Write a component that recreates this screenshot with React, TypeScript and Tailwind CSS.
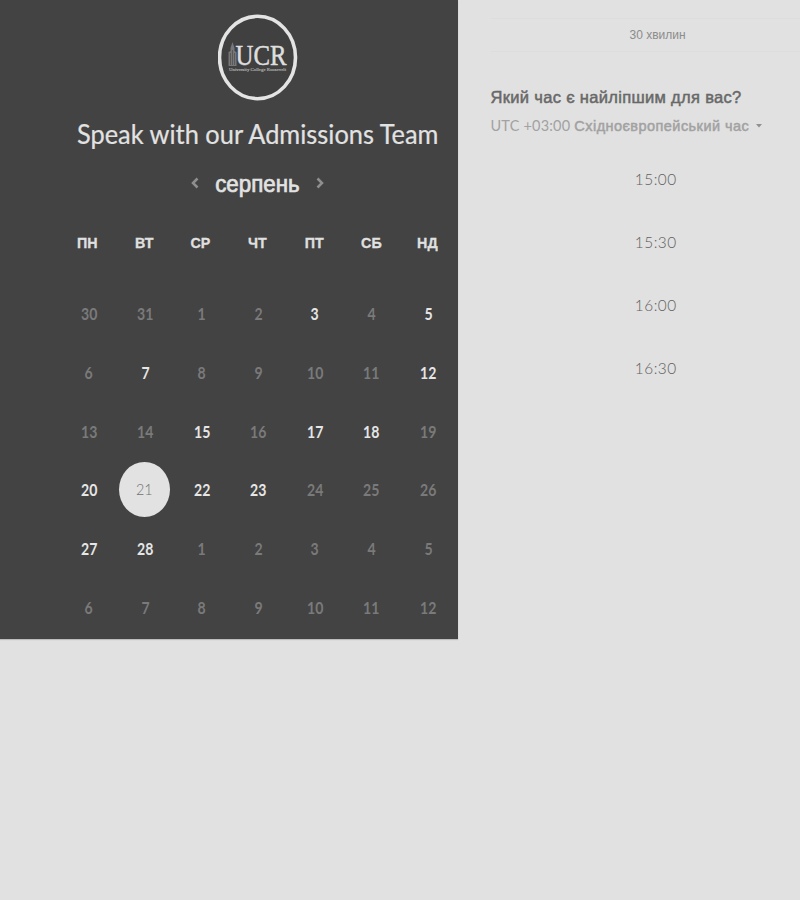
import React from "react";

const weekdays = ["ПН", "ВТ", "СР", "ЧТ", "ПТ", "СБ", "НД"];

const weeks = [
  [30, 31, 1, 2, 3, 4, 5],
  [6, 7, 8, 9, 10, 11, 12],
  [13, 14, 15, 16, 17, 18, 19],
  [20, 21, 22, 23, 24, 25, 26],
  [27, 28, 1, 2, 3, 4, 5],
  [6, 7, 8, 9, 10, 11, 12],
];

const open = [[4, 6], [1, 6], [2, 4, 5], [0, 2, 3], [0, 1], []];
const times = ["15:00", "15:30", "16:00", "16:30"];

function Logo() {
  return (
    <svg width="80" height="87" viewBox="0 0 80 87" className="block">
      <ellipse cx="39.5" cy="43.5" rx="38" ry="41.2" fill="#404040" stroke="#e4e4e4" strokeWidth="3.6" />
      <path d="M10.500 52V38l2-1v-3l2-6 2 6v3l2 1v14z" fill="#777" />
      <path d="M12.500 39v12M14.500 36v15M16.500 39v12" stroke="#4c4c4c" strokeWidth="0.7" />
      <text x="17.5" y="50.5" textLength="51" lengthAdjust="spacingAndGlyphs" fontFamily="'Liberation Serif', serif" fontSize="28.5" fill="#dedede" stroke="#dedede" strokeWidth="0.5">UCR</text>
      <text x="11" y="56.5" textLength="57" lengthAdjust="spacingAndGlyphs" fontFamily="'Liberation Serif', serif" fontSize="5" fill="#a8a8a8" stroke="#a8a8a8" strokeWidth="0.2">University College Roosevelt</text>
    </svg>
  );
}

function Chevron({ d }: { d: string }) {
  return (
    <svg width="8" height="12" viewBox="0 0 8 12" fill="none" stroke="#8f8f8f" strokeWidth="2.5">
      <path d={d} />
    </svg>
  );
}

function Day({ day, active, selected }: { day: number; active: boolean; selected: boolean }) {
  if (selected) {
    return (
      <div className="flex items-center justify-center">
        <div className="-mt-[2px] -ml-[2px] flex h-[55px] w-[51px] shrink-0 items-center justify-center rounded-[50%] bg-[#e2e2e2] text-[16px] font-light text-[#707070]">
          <span className="-mt-px scale-x-90">{day}</span>
        </div>
      </div>
    );
  }
  return (
    <div className={"flex items-center justify-center text-[16px] font-bold " + (active ? "text-[#e6e6e6]" : "text-[#7a7a7a]")}>
      <span className="scale-x-[.88] scale-y-[1.04]">{day}</span>
    </div>
  );
}

export default function App() {
  return (
    <div className="flex h-[900px] w-[800px] items-start overflow-hidden bg-[#e1e1e1] font-['Lato','Liberation_Sans',sans-serif]">
      <aside className="flex h-[639px] w-[457.5px] shrink-0 flex-col bg-[#434343] shadow-[0_1px_1px_#bdbdbd]">
        <div className="ml-[218px] mt-[14px] h-[87px]"><Logo /></div>
        <h1 className="ml-[77px] mt-[17px] h-8 w-max origin-left scale-x-[.976] whitespace-nowrap text-[26px] leading-8 text-[#e2e2e2] [-webkit-text-stroke:0.2px_#e2e2e2]">
          Speak with our Admissions Team
        </h1>
        <div className="ml-[191px] mt-[17px] flex h-8 w-[133.5px] items-center justify-between">
          <Chevron d="M6.500 1.500 2 6l4.500 4.500" />
          <span className="-mx-1 mt-[2px] scale-x-[.93] font-['Liberation_Sans',sans-serif] text-[24px] leading-8 text-[#e2e2e2] [-webkit-text-stroke:0.7px_#e2e2e2]">серпень</span>
          <Chevron d="M1.500 1.500 6 6l-4.500 4.500" />
        </div>
        <div className="ml-[59px] mt-[34px] grid h-5 w-[397px] grid-cols-7">
          {weekdays.map((d) => (
            <div key={d} className="scale-x-[.92] text-center font-['Liberation_Sans',sans-serif] text-[15.5px] font-bold leading-5 text-[#e0e0e0] [-webkit-text-stroke:0.3px_#e0e0e0]">{d}</div>
          ))}
        </div>
        <div className="ml-[60.500px] mt-[31.5px] grid h-[353px] w-[396px] shrink-0 grid-cols-7 grid-rows-6">
          {weeks.map((week, r) =>
            week.map((day, c) => (
              <Day key={r + "-" + c} day={day} active={open[r].includes(c)} selected={r === 3 && c === 1} />
            ))
          )}
        </div>
      </aside>
      <main className="flex min-w-0 flex-1 flex-col pl-[33px]">
        <div className="mt-[18px] flex h-[34px] items-center border-y border-[#dddddd] pl-[139px]">
          <span className="font-['Liberation_Sans',sans-serif] text-[12px] text-[#8c8c8c]">30 хвилин</span>
        </div>
        <h2 className="mt-[33px] h-6 whitespace-nowrap font-['Liberation_Sans',sans-serif] text-[16.5px] leading-6 tracking-[0.32px] text-[#686868] [-webkit-text-stroke:0.5px_#686868]">
          Який час є найліпшим для вас?
        </h2>
        <div className="mt-[7px] flex h-5 items-center whitespace-nowrap text-[14.5px] leading-5 text-[#a2a2a2]">
          <span className="tracking-[0.2px]">UTC +03:00</span>
          <span className="ml-1 font-['Liberation_Sans',sans-serif] text-[14.5px] tracking-[0.45px] [-webkit-text-stroke:0.5px_#a2a2a2]">Східноєвропейський час</span>
          <svg width="6" height="4" viewBox="0 0 6 4" className="ml-[7px]"><path d="M0 0h6L3 3.500z" fill="#909090" /></svg>
        </div>
        <div className="mt-[11.5px] flex w-[331px] flex-col items-center">
          {times.map((t) => (
            <div key={t} className="flex h-[63px] scale-x-[.96] items-center text-[16px] font-light tracking-[0.5px] text-[#606060]">{t}</div>
          ))}
        </div>
      </main>
    </div>
  );
}
